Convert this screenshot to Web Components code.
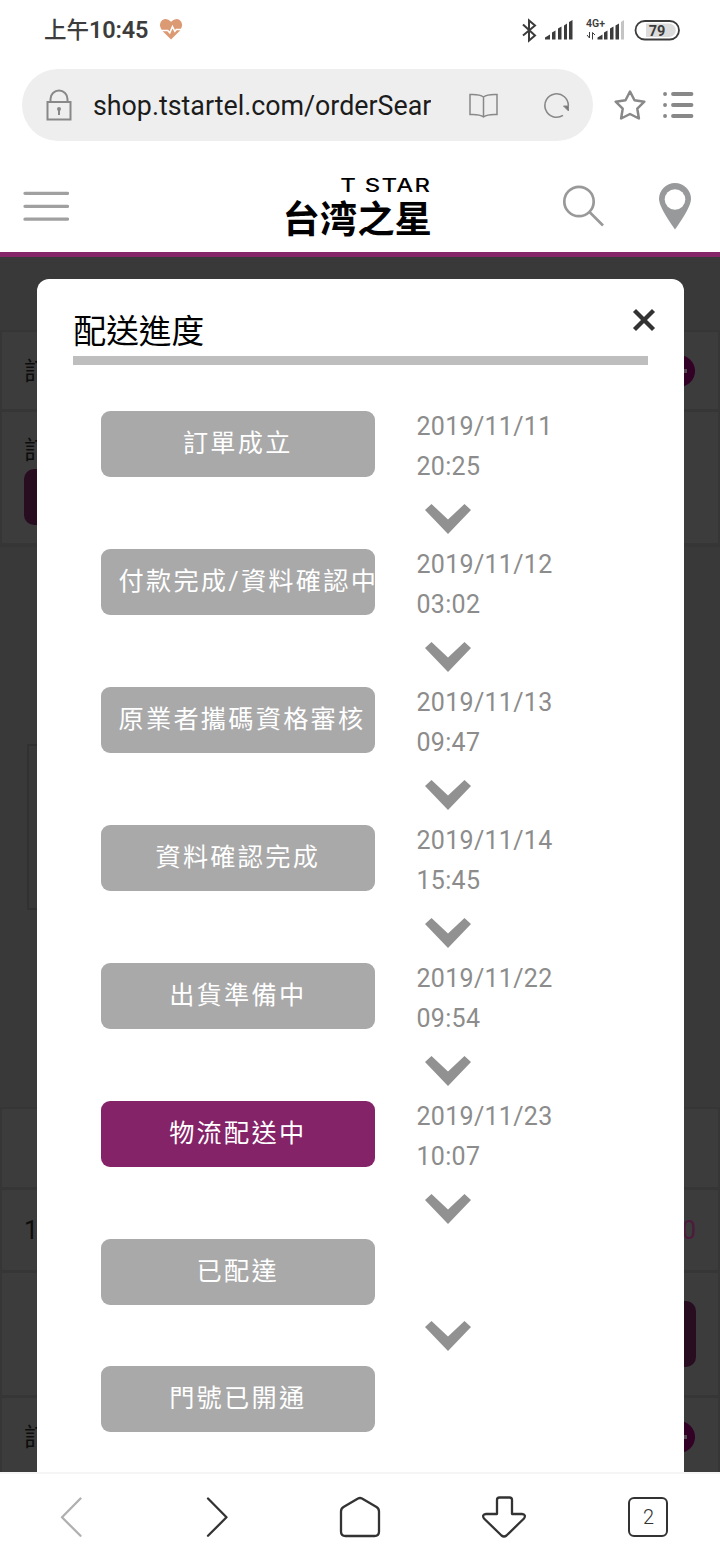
<!DOCTYPE html>
<html lang="zh-Hant">
<head>
<meta charset="utf-8">
<title>配送進度</title>
<style>
    body {
        margin: 0;
        background: #fff;
        font-family: Roboto, "Noto Sans CJK TC", sans-serif;
    }
</style>
</head>
<body>
<phone-screen>
    <status-bar slot="top"></status-bar>
    <address-bar slot="top">shop.tstartel.com/orderSear</address-bar>
    <shop-header slot="top"></shop-header>
    <order-page></order-page>
    <progress-dialog heading="配送進度">
        <progress-step label="訂單成立" date="2019/11/11" time="20:25"></progress-step>
        <progress-step label="付款完成/資料確認中" date="2019/11/12" time="03:02"></progress-step>
        <progress-step label="原業者攜碼資格審核" date="2019/11/13" time="09:47"></progress-step>
        <progress-step label="資料確認完成" date="2019/11/14" time="15:45"></progress-step>
        <progress-step label="出貨準備中" date="2019/11/22" time="09:54"></progress-step>
        <progress-step label="物流配送中" date="2019/11/23" time="10:07" active></progress-step>
        <progress-step label="已配達"></progress-step>
        <progress-step label="門號已開通" last></progress-step>
    </progress-dialog>
    <nav-bar slot="bottom"></nav-bar>
</phone-screen>

<script>
customElements.define("phone-screen", class extends HTMLElement {
    connectedCallback() {
        this.attachShadow({mode: 'open'});
        this.shadowRoot.innerHTML = `
            <style>
                :host {
                    display: flex;
                    flex-direction: column;
                    width: 720px;
                    height: 1560px;
                    overflow: hidden;
                }

                main {
                    position: relative;
                    flex: 1;
                    min-height: 0;
                    overflow: hidden;
                }
            </style>
            <slot name="top"></slot>
            <main><slot></slot></main>
            <slot name="bottom"></slot>
        `;
    }
});

customElements.define("status-bar", class extends HTMLElement {
    connectedCallback() {
        this.attachShadow({mode: 'open'});
        this.shadowRoot.innerHTML = `
            <style>
                :host {
                    display: flex;
                    justify-content: space-between;
                    height: 59px;
                    padding: 0 39px 0 44px;
                    align-items: center;
                    box-sizing: border-box;
                    color: #3c3c3c;
                }

                div {
                    display: flex;
                    align-items: center;
                }

                .clock {
                    font-size: 22.5px;
                    line-height: 30px;
                    font-weight: 500;
                    white-space: nowrap;
                }

                .clock b {
                    font-size: 23.5px;
                    font-weight: 600;
                    letter-spacing: -0.2px;
                }

                svg {
                    display: block;
                }

                .heart {
                    margin-left: 11px;
                }
            </style>
            <div>
                <span class="clock">上午<b>10:45</b></span>
                <svg class="heart" width="25" height="23" viewBox="0 0 26 24">
                    <path d="M12.500 22.500L3 13Q-1.500 6 3.500 2Q8.500-.5 12.500 4Q17-.5 21.500 2Q26.500 6 22 13Z" fill="#db9a74"/>
                    <path d="M1 13H9l2.200 2.500L14 9l2.500 5 1.500-2h7" fill="none" stroke="#fff" stroke-width="1.600"/>
                </svg>
            </div>
            <svg width="160" height="30" viewBox="521 14 160 30">
                <path d="M523 23.500l12 11-6 5V19.500l6 5-12 10" fill="none" stroke="#3c3c3c" stroke-width="2"/>
                <path d="M545 38.500v-2l5-3v5zM552 38.500v-7l3.500-2v9zM558 38.500v-11l3.500-2v13zM564 38.500v-14l3-2v16zM569 38.500V21l3.500-2v19.500z" fill="#3c3c3c"/>
                <text x="586" y="26" font-size="10.500" font-weight="600" font-family="Roboto, sans-serif" fill="#3c3c3c">4G+</text>
                <path d="M587 34l2.500 3V31M592.500 38.500V31.500l2.500 2.500" fill="none" stroke="#3c3c3c" stroke-width="1"/>
                <path d="M597.500 38.500v-2l5-3v5zM604 38.500v-7l3.500-2v9zM610 38.500v-11l3.500-2v13zM615.500 38.500v-14l3.500-2v16z" fill="#3c3c3c"/>
                <path d="M621 38.500V21l3-2v19.500z" fill="#c4c4c4"/>
                <rect x="635.500" y="20" width="43.500" height="18.500" rx="9.250" fill="#fff" stroke="#3c3c3c" stroke-width="1.800"/>
                <path d="M646 22.500h23a6.700 6.700 0 0 1 0 13.500h-23z" fill="#dcdcdc"/>
                <text x="657" y="34.500" text-anchor="middle" font-size="14.500" font-weight="700" font-family="Roboto, sans-serif" fill="#3c3c3c">79</text>
            </svg>
        `;
    }
});

customElements.define("address-bar", class extends HTMLElement {
    connectedCallback() {
        this.attachShadow({mode: 'open'});
        this.shadowRoot.innerHTML = `
            <style>
                :host {
                    display: flex;
                    align-items: center;
                    height: 92px;
                    padding: 0 25px 0 22px;
                    box-sizing: border-box;
                }

                .pill {
                    display: flex;
                    align-items: center;
                    width: 571px;
                    height: 72px;
                    padding: 0 23px;
                    border-radius: 36px;
                    box-sizing: border-box;
                    background: #eee;
                }

                .url {
                    width: 340px;
                    margin-left: 21px;
                    padding-top: 2px;
                    overflow: hidden;
                    white-space: nowrap;
                    font-size: 26.800px;
                    line-height: 36px;
                    color: #1c1c1c;
                }

                svg {
                    display: block;
                    flex: none;
                    fill: none;
                    stroke: #888;
                }

                .book {
                    margin-left: 37px;
                }

                .reload {
                    margin-left: 43px;
                }

                .star {
                    margin-left: 21px;
                }

                .menu {
                    margin-left: 16px;
                }
            </style>
            <div class="pill">
                <svg width="27" height="34" viewBox="45 88 27 34" stroke-width="2">
                    <path d="M47.500 102h23v17.500h-23zM50.500 102v-3a8.500 8.500 0 0 1 17 0v3"/>
                    <circle cx="59" cy="109" r="2" fill="#888" stroke="none"/>
                    <path d="M59 109v6"/>
                </svg>
                <span class="url"><slot></slot></span>
                <svg class="book" width="31" height="28" viewBox="469 91 31 28" stroke-width="1.500">
                    <path d="M484.500 97q-4-3-13.500-2.500v20q9.500-.5 13.500 2.500q4-3 13.500-2.500v-20q-9.500-.5-13.500 2.500v20"/>
                </svg>
                <svg class="reload" width="28" height="28" viewBox="542 91 28 28" stroke-width="1.600">
                    <path d="M563 115.300A11.700 11.700 0 1 1 568.300 106"/>
                    <path d="M563.500 106h5v5z" fill="#777" stroke-width="1"/>
                </svg>
            </div>
            <svg class="star" width="32" height="32" viewBox="614 89 32 32" stroke-width="2.500" stroke-linejoin="round">
                <path d="M630 91.500l4.500 8.700 9.800 1.500-7 7 1.600 9.800-8.900-4.500-8.900 4.500 1.600-9.800-7-7 9.800-1.500z"/>
            </svg>
            <svg class="menu" width="32" height="30" viewBox="662 90 32 30" stroke-width="3.800" stroke-linecap="round">
                <path d="M673 94h18.500M673 105h18.500M673 116h18.500M665 94h.1M665 105h.1M665 116h.1"/>
            </svg>
        `;
    }
});

customElements.define("shop-header", class extends HTMLElement {
    connectedCallback() {
        this.attachShadow({mode: 'open'});
        this.shadowRoot.innerHTML = `
            <style>
                :host {
                    display: grid;
                    grid-template-columns: 1fr auto 1fr;
                    align-items: center;
                    height: 106px;
                    padding: 8px 28px 0 23px;
                    box-sizing: border-box;
                    border-bottom: 5px solid #842668;
                }

                svg {
                    display: block;
                }

                .logo {
                    display: flex;
                    flex-direction: column;
                    align-items: flex-end;
                    width: 149px;
                    margin-top: 6px;
                    color: #000;
                }

                .en {
                    font-family: Inter, sans-serif;
                    font-size: 19px;
                    line-height: 22px;
                    font-weight: 500;
                    letter-spacing: 1px;
                    margin-right: 0.500px;
                    transform: scaleX(1.260);
                    transform-origin: right;
                }

                .zh {
                    font-family: Roboto, "Noto Sans CJK JP", sans-serif;
                    font-size: 37.400px;
                    line-height: 46px;
                    font-weight: 700;
                    white-space: nowrap;
                }

                .tools {
                    display: flex;
                    align-items: center;
                    justify-content: flex-end;
                    gap: 53px;
                }
            </style>
            <svg width="46" height="32" viewBox="23 190 46 32" stroke="#a0a0a0" stroke-width="3.300" stroke-linecap="round">
                <path d="M25 193.300h42.500M25 206.300h42.500M25 219.200h42.500"/>
            </svg>
            <div class="logo">
                <span class="en">T STAR</span>
                <span class="zh">台湾之星</span>
            </div>
            <div class="tools">
                <svg width="43" height="44" viewBox="562 184 43 44" fill="none" stroke="#999" stroke-width="2.700">
                    <circle cx="579" cy="201.500" r="14.700"/>
                    <path d="M589.500 212l13.500 13.500"/>
                </svg>
                <svg width="34" height="48" viewBox="658 182 34 48">
                    <path d="M675 229.500Q659 207 659 199a16 16 0 0 1 32 0Q691 207 675 229.500z" fill="#97999b"/>
                    <circle cx="675" cy="199.500" r="10.300" fill="#fff"/>
                </svg>
            </div>
        `;
    }
});

// order list lying dimmed under the dialog
customElements.define("order-page", class extends HTMLElement {
    connectedCallback() {
        this.attachShadow({mode: 'open'});
        this.shadowRoot.innerHTML = `
            <style>
                :host {
                    display: block;
                    height: 1215px;
                    overflow: hidden;
                    background: #393939;
                    color: #0d0d0d;
                    font-size: 25px;
                }

                .card {
                    border: 2px solid #363636;
                    border-bottom-width: 1px;
                    background: #3c3c3c;
                    box-sizing: border-box;
                }

                .row {
                    display: flex;
                    justify-content: space-between;
                    align-items: center;
                    padding: 0 22px;
                    border-bottom: 3px solid #363636;
                    box-sizing: border-box;
                }

                .row > span:first-child {
                    margin-top: -3px;
                }

                .first {
                    margin-top: 73px;
                }

                .tall {
                    flex-direction: column;
                    align-items: flex-start;
                    justify-content: flex-start;
                    padding-top: 23px;
                    line-height: 38px;
                }

                .btn {
                    width: 90px;
                    height: 56px;
                    border-radius: 10px;
                    background: #280c20;
                }

                .tall .btn {
                    margin-top: -1px;
                }

                .frame {
                    height: 166px;
                    margin: 197px 60px 0 27px;
                    border: 2px solid #313131;
                    box-sizing: border-box;
                }

                .second {
                    margin-top: 197px;
                }

                .row > .num:first-child {
                    margin-top: 0;
                }

                .price {
                    color: #4d1a3c;
                }

                .minus {
                    display: flex;
                    align-items: center;
                    justify-content: center;
                    width: 32px;
                    height: 32px;
                    margin-right: 1px;
                    border-radius: 50%;
                    background: #330026;
                }

                .minus::after {
                    content: "";
                    width: 16px;
                    height: 4px;
                    background: #554a52;
                }
            </style>
            <div class="card first">
                <div class="row" style="height: 80px"><span>訂</span><span class="minus"></span></div>
                <div class="row tall" style="height: 134px"><span>訂</span><span class="btn"></span></div>
            </div>
            <div class="frame"></div>
            <div class="card second">
                <div class="row" style="height: 81px"></div>
                <div class="row" style="height: 83px"><span class="num">1</span><span class="price">0</span></div>
                <div class="row" style="height: 125px"><span></span><span class="btn" style="height: 66px"></span></div>
                <div class="row" style="height: 80px"><span>訂</span><span class="minus"></span></div>
            </div>
        `;
    }
});

customElements.define("progress-dialog", class extends HTMLElement {
    connectedCallback() {
        this.attachShadow({mode: 'open'});
        this.shadowRoot.innerHTML = `
            <style>
                :host {
                    position: absolute;
                    top: 22px;
                    left: 36.500px;
                    right: 36px;
                    bottom: 0;
                    padding: 0 36.500px;
                    border-radius: 12px 12px 0 0;
                    box-sizing: border-box;
                    overflow: hidden;
                    background: #fff;
                }

                header {
                    display: flex;
                    justify-content: space-between;
                    height: 86px;
                    border-bottom: 9px solid #bebebe;
                    box-sizing: border-box;
                }

                h2 {
                    margin: 28px 0 0 0.500px;
                    font-size: 32.700px;
                    line-height: 50px;
                    font-weight: 400;
                    color: #000;
                }

                svg {
                    display: block;
                    margin: 29px -8px 0 0;
                }

                .steps {
                    padding: 41px 0 0 27.500px;
                }
            </style>
            <header>
                <h2>${this.getAttribute('heading')}</h2>
                <svg width="24" height="24" viewBox="0 0 24 24" stroke="#333" stroke-width="4.300">
                    <path d="M2.500 2.500l19 19M21.500 2.500l-19 19"/>
                </svg>
            </header>
            <div class="steps"><slot></slot></div>
        `;
    }
});

customElements.define("progress-step", class extends HTMLElement {
    connectedCallback() {
        const date = this.getAttribute('date');
        const arrow = `
            <svg width="46" height="30" viewBox="0 0 46 30">
                <path d="M0 6L6.500 0 23 15.500 39.500 0 46 6 23 30z" fill="#919191"/>
            </svg>`;
        this.attachShadow({mode: 'open'});
        this.shadowRoot.innerHTML = `
            <style>
                :host {
                    display: flex;
                    align-items: flex-start;
                    gap: 41.500px;
                }

                .label {
                    width: 274.500px;
                    height: 66px;
                    margin-top: 4.500px;
                    padding: 1px 18px 0;
                    border-radius: 9px;
                    box-sizing: border-box;
                    white-space: nowrap;
                    text-align: center;
                    font-size: 25.200px;
                    line-height: 64px;
                    letter-spacing: 2.250px;
                    color: #fff;
                    background: #a9a9a9;
                }

                :host([active]) .label {
                    background: #842368;
                }

                .when {
                    min-height: 69px;
                    padding-top: 1px;
                    font-size: 25px;
                    line-height: 40px;
                    letter-spacing: 0.300px;
                    color: #8c8c8c;
                }

                .when span {
                    display: block;
                }

                svg {
                    display: block;
                    margin: 17px 0 10px 8.500px;
                }
            </style>
            <div class="label">${this.getAttribute('label')}</div>
            <div>
                <div class="when">
                    ${date ? `<span>${date}</span><span>${this.getAttribute('time')}</span>` : ''}
                </div>
                ${this.hasAttribute('last') ? '' : arrow}
            </div>
        `;
    }
});

customElements.define("nav-bar", class extends HTMLElement {
    connectedCallback() {
        this.attachShadow({mode: 'open'});
        this.shadowRoot.innerHTML = `
            <style>
                :host {
                    display: grid;
                    grid-template-columns: repeat(5, 1fr);
                    align-items: center;
                    justify-items: center;
                    height: 88px;
                    padding-bottom: 1px;
                    border-top: 2px solid #f5f5f5;
                    box-sizing: border-box;
                    background: #fff;
                }

                svg {
                    display: block;
                    fill: none;
                    stroke: #333;
                    stroke-width: 2.3;
                    stroke-linecap: round;
                    stroke-linejoin: round;
                }

                .off {
                    stroke: #b0b0b0;
                }

                .tabs {
                    width: 40px;
                    height: 40px;
                    border: 2.300px solid #333;
                    border-radius: 6px;
                    box-sizing: border-box;
                    padding-left: 1px;
                    text-align: center;
                    font-size: 20px;
                    line-height: 36px;
                    font-weight: 300;
                    color: #333;
                }
            </style>
            <svg class="off" width="44" height="44" viewBox="50 1494 44 44"><path d="M80.500 1497.500L62 1516.300l18.500 18.500"/></svg>
            <svg width="44" height="44" viewBox="194 1494 44 44"><path d="M208 1497.500l18.500 18.800-18.500 18.500"/></svg>
            <svg width="44" height="44" viewBox="338 1494 44 44"><path d="M358 1497.500q2-1 4 0l14.500 8.500q2.500 1.500 2.500 4.500v20q0 4.500-4.500 4.500h-29q-4.500 0-4.500-4.500v-20q0-3 2.500-4.500z"/></svg>
            <svg width="46" height="44" viewBox="481 1494 46 44"><path d="M497 1513v-14q0-2.500 2.500-2.500h10q2.500 0 2.500 2.500v14h10q4.500.5 2 4.500l-17.500 17q-2.500 2-5 0l-17.500-17q-2.500-4 2-4.500z"/></svg>
            <div class="tabs">2</div>
        `;
    }
});
</script>
</body>
</html>
